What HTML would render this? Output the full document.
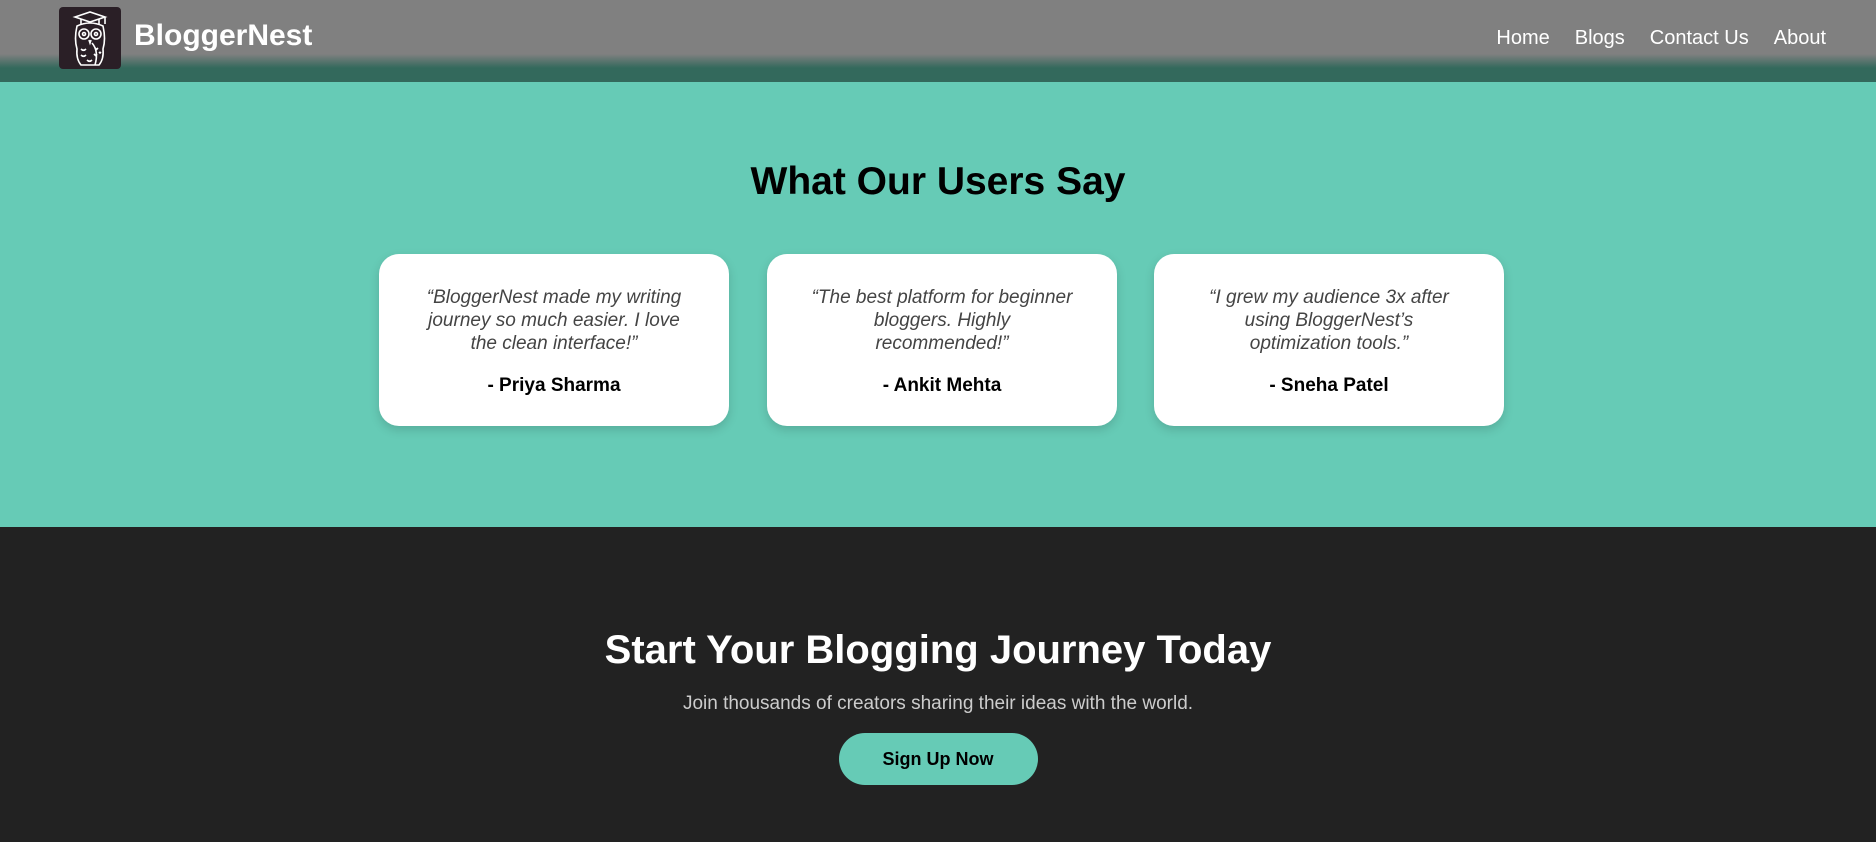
<!DOCTYPE html>
<html><head><meta charset="utf-8"><style>
*{margin:0;padding:0;box-sizing:border-box}
body{width:1876px;height:842px;overflow:hidden;font-family:"Liberation Sans",Arial,sans-serif;background:#222}
header{position:absolute;left:0;top:0;width:1876px;height:82px;background:linear-gradient(to bottom,#808080 0,#808080 54px,#33695c 68px,#33695c 82px)}
.logo{position:absolute;left:59px;top:7px;width:62px;height:62px;background:#2a1f26;border-radius:4px}
.brand{position:absolute;left:134px;top:19px;color:#fff;font-weight:bold;font-size:30px}
nav{position:absolute;right:50px;top:27px;font-size:20px;color:#fff}
nav span{margin-left:25px}
.teal{position:absolute;top:82px;left:0;width:1876px;height:445px;background:#66cbb6}
h2{position:absolute;width:100%;text-align:center;font-size:39px;top:78px;color:#000}
.card{position:absolute;top:172px;width:350px;height:172px;background:#fff;border-radius:20px;box-shadow:0 4px 10px rgba(0,0,0,.15);text-align:center;padding:0 38px}
.card p{margin-top:32px;font-style:italic;font-size:19px;line-height:23px;color:#444}
.card b{display:block;margin-top:20px;font-size:19px;color:#000}
.cta{position:absolute;top:527px;left:0;width:1876px;height:315px;background:#222;text-align:center}
.cta h3{color:#fff;font-size:40px;margin-top:101px}
.cta p{color:#ccc;font-size:19px;margin-top:20px}
.btn{display:inline-block;margin-top:18px;width:199px;height:52px;line-height:52px;border-radius:26px;background:#66cbb6;color:#000;font-weight:bold;font-size:18px}
</style></head><body>
<header>
<div class="logo"><svg width="62" height="62" viewBox="0 0 62 62" fill="none" stroke="#fff" stroke-width="1.6"><path d="M16 10 L31 5 L46 10 L31 15 Z"/><path d="M22 12 v5 M40 12 v5 M46 10 v7"/><path d="M18 19 Q31 13 44 19 Q47 32 44 42 Q45 52 40 58 H22 Q17 52 18 42 Q15 32 18 19Z"/><circle cx="25" cy="27" r="5"/><circle cx="37" cy="27" r="5"/><circle cx="25" cy="27" r="1.5"/><circle cx="37" cy="27" r="1.5"/><path d="M30 33 L31 36 L32 33"/><path d="M22 42 q2.5 2.5 5 0 M22 48 q2.5 2.5 5 0 M28 53 q2.5 2.5 5 0"/><path d="M36 41 l1.5 1.5 1.5-1.5 M35 47 l1.5 1.5 1.5-1.5 M40 45 l1 1 1-1"/><path d="M33 36 Q40 44 36 58"/></svg></div>
<div class="brand">BloggerNest</div>
<nav><span>Home</span><span>Blogs</span><span>Contact Us</span><span>About</span></nav>
</header>
<div class="teal">
<h2>What Our Users Say</h2>
<div class="card" style="left:379px"><p>“BloggerNest made my writing journey so much easier. I love the clean interface!”</p><b>- Priya Sharma</b></div>
<div class="card" style="left:767px"><p>“The best platform for beginner bloggers. Highly recommended!”</p><b>- Ankit Mehta</b></div>
<div class="card" style="left:1154px"><p>“I grew my audience 3x after using BloggerNest’s optimization tools.”</p><b>- Sneha Patel</b></div>
</div>
<div class="cta">
<h3>Start Your Blogging Journey Today</h3>
<p>Join thousands of creators sharing their ideas with the world.</p>
<div class="btn">Sign Up Now</div>
</div>
</body></html>
